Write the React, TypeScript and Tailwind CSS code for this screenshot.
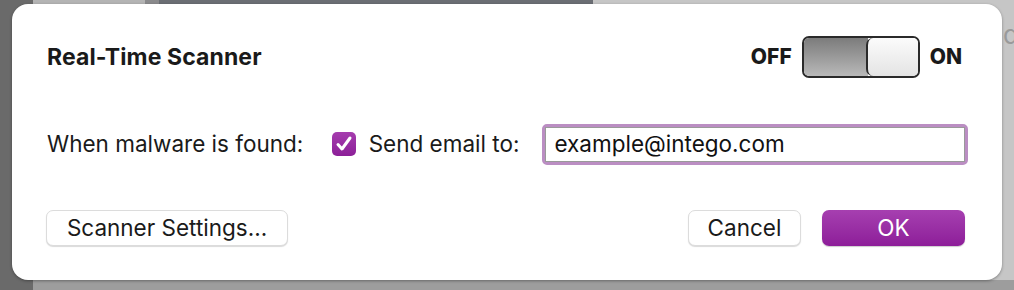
import React from 'react';

const font = { fontFamily: 'Inter, "Liberation Sans", sans-serif' };

const Backdrop: React.FC = () => (
  <div className="absolute inset-0 flex">
    <div className="w-[33px] h-full bg-[#6a6a6a]" />
    <div className="flex-1 flex flex-col">
      <div className="h-[6px] flex">
        <div className="w-[112px] bg-[#b4b4b4]" />
        <div className="w-[14px] bg-[#8a8a8c]" />
        <div className="w-[434px] bg-[#6b6e74]" />
        <div className="flex-1 bg-[#c6c6c6]" />
      </div>
      <div className="flex-1 bg-[#c6c6c6]" />
      <div className="h-[10px] bg-[#9d9d9d]" />
    </div>
  </div>
);

const Toggle: React.FC = () => (
  <div className="w-[118px] h-[42px] rounded-[7px] border-2 border-[#2a2a2a] flex overflow-hidden">
    <div className="flex-1 bg-gradient-to-b from-[#7c7c7c] to-[#b9b9b9]" />
    <div className="w-[52px] border-l-2 border-[#2a2a2a] rounded-l-[7px] -ml-[2px] bg-gradient-to-b from-[#fbfbfb] to-[#e4e4e4]" />
  </div>
);

const Checkbox: React.FC = () => (
  <div className="w-[24px] h-[24px] rounded-[5px] bg-gradient-to-b from-[#a53cae] to-[#8c1f98] flex items-center justify-center">
    <svg width="18" height="18" viewBox="0 0 18 18" fill="none">
      <path d="M3 9.5 L7 14 L15 3" stroke="white" strokeWidth="3" strokeLinecap="round" strokeLinejoin="round" />
    </svg>
  </div>
);

export default function App() {
  return (
    <div className="relative w-[1014px] h-[290px] overflow-hidden" style={font}>
      <Backdrop />
      <span className="absolute left-[1003px] top-[22px] text-[26px] leading-none text-[#9a9a9a]">d</span>
      <div className="relative ml-[12px] mt-[4px] w-[990px] h-[276px] bg-white rounded-[16px] shadow-[0_1px_3px_rgba(0,0,0,0.35)] px-[34px] pt-[32px] pb-[34px] flex flex-col">
        <div className="flex items-center justify-between h-[42px]">
          <h1 className="text-[23px] font-bold text-[#1a1a1a] pl-[1px] tracking-[0.1px]">Real-Time Scanner</h1>
          <div className="flex items-center gap-[10px] mr-[6px]">
            <span className="text-[21px] font-extrabold text-[#1a1a1a]">OFF</span>
            <Toggle />
            <span className="text-[21px] font-extrabold text-[#1a1a1a]">ON</span>
          </div>
        </div>
        <div className="flex items-center mt-[46px] h-[40px]">
          <span className="text-[22.5px] text-[#1a1a1a] pl-[1px] w-[286px]">When malware is found:</span>
          <Checkbox />
          <span className="text-[22.5px] text-[#1a1a1a] ml-[13px] w-[174px]">Send email to:</span>
          <div className="w-[426px] h-[41px] rounded-[5px] border-[3px] border-[#bb8ec3] bg-white">
            <div className="h-full border border-[#9a9a9a] flex items-center px-[8px] text-[22.5px] text-[#111]">
              example@intego.com
            </div>
          </div>
        </div>
        <div className="flex items-center justify-between mt-auto">
          <button className="h-[36px] w-[242px] rounded-[7px] bg-white border border-[#dcdcdc] shadow-[0_1px_1px_rgba(0,0,0,0.15)] text-[22.5px] text-[#1a1a1a]">
            Scanner Settings...
          </button>
          <div className="flex items-center gap-[21px] mr-[3px]">
            <button className="h-[36px] w-[113px] rounded-[7px] bg-white border border-[#dcdcdc] shadow-[0_1px_1px_rgba(0,0,0,0.15)] text-[22.5px] text-[#1a1a1a]">
              Cancel
            </button>
            <button className="h-[36px] w-[143px] rounded-[7px] bg-gradient-to-b from-[#a63fb0] to-[#8d1d99] shadow-[0_1px_1px_rgba(0,0,0,0.2)] text-[22.5px] text-white">
              OK
            </button>
          </div>
        </div>
      </div>
    </div>
  );
}
